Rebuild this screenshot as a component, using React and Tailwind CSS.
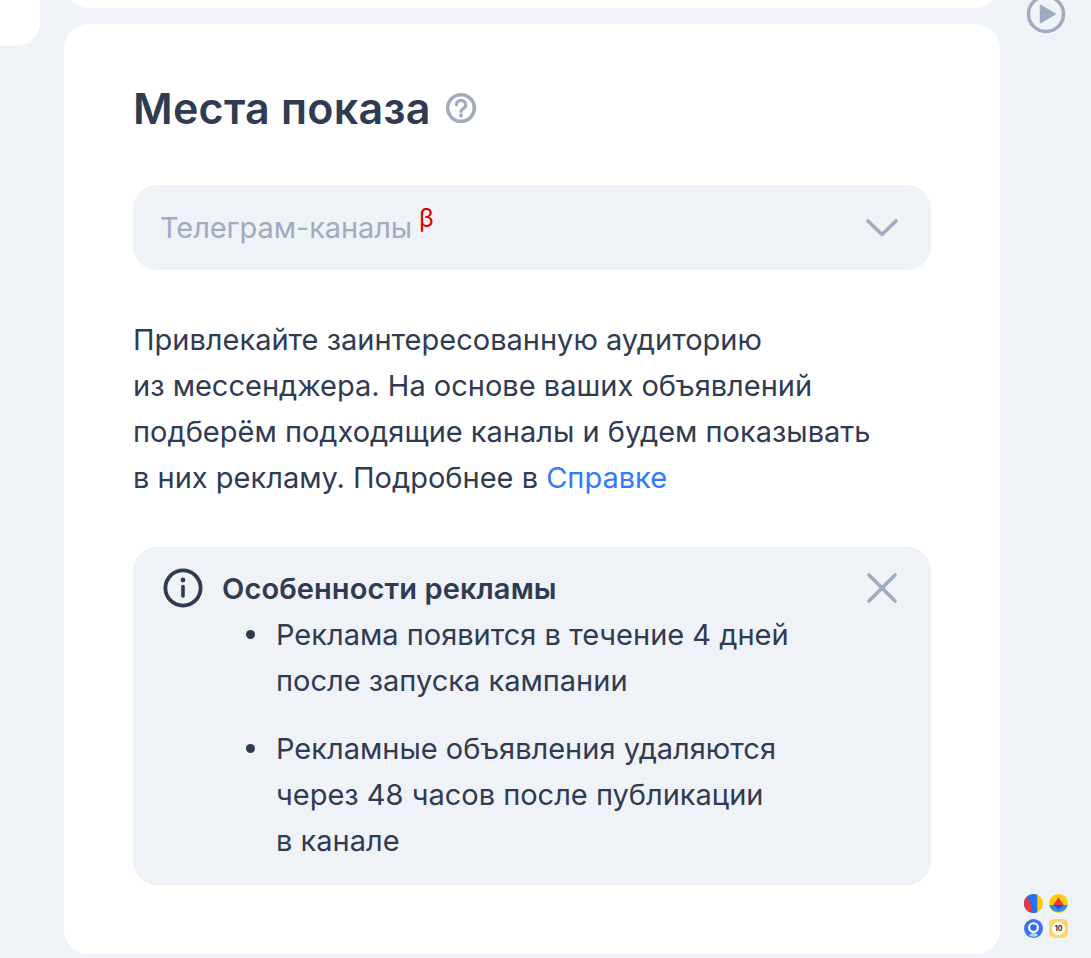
function PlayIcon() {
  return (
    <svg width="40" height="40" viewBox="0 0 40 40" fill="none">
      <circle cx="20" cy="20" r="17.5" stroke="#a0abc0" strokeWidth="3.5" />
      <path d="M14.5 11.5 L29 20 L14.5 28.5 Z" fill="#a0abc0" stroke="#a0abc0" strokeWidth="1.5" strokeLinejoin="round" />
    </svg>
  );
}

function HelpIcon() {
  return (
    <svg width="32" height="32" viewBox="0 0 32 32" fill="none" stroke="#a0abc0">
      <circle cx="16" cy="16" r="13.3" strokeWidth="3.6" />
      <path d="M11.5 12.8 A4.6 4.4 0 1 1 18.6 16.4 C17 17.4 16 18 16 19.6" strokeWidth="3.2" strokeLinecap="round" />
      <circle cx="16" cy="23.4" r="2" fill="#a0abc0" stroke="none" />
    </svg>
  );
}

function ChevronIcon() {
  return (
    <svg width="32" height="20" viewBox="0 0 32 20" fill="none">
      <path d="M2 3 L16 16.5 L30 3" stroke="#a0abc0" strokeWidth="3.6" strokeLinecap="round" strokeLinejoin="round" />
    </svg>
  );
}

function InfoIcon() {
  return (
    <svg width="40" height="40" viewBox="0 0 40 40" fill="none">
      <circle cx="20" cy="20" r="17.6" stroke="#2f3b52" strokeWidth="3.8" />
      <path d="M20 18.5 V28" stroke="#2f3b52" strokeWidth="3.6" strokeLinecap="round" />
      <circle cx="20" cy="12" r="2.4" fill="#2f3b52" />
    </svg>
  );
}

function CloseIcon() {
  return (
    <svg width="32" height="32" viewBox="0 0 32 32" fill="none">
      <path d="M3 3 L29 29 M29 3 L3 29" stroke="#a0abc0" strokeWidth="3.6" strokeLinecap="round" />
    </svg>
  );
}

function ServiceIcons() {
  return (
    <div className="grid grid-cols-2 gap-x-[7px] gap-y-[6px] w-[44px]">
      <svg width="19" height="19" viewBox="0 0 20 20">
        <circle cx="10" cy="10" r="10" fill="#ffcc00" />
        <path d="M14 0.9 A10 10 0 1 0 14 19.1 Z" fill="#2a6ff0" />
        <path d="M2.5 3.4 A10 10 0 0 0 7 19.5 C8 15 8.5 9.5 2.5 3.4 Z" fill="#f0324b" />
      </svg>
      <svg width="19" height="19" viewBox="0 0 20 20">
        <circle cx="10" cy="10" r="10" fill="#ffcc00" />
        <path d="M0.3 11.5 H19.7 A10 10 0 0 1 0.3 11.5 Z" fill="#2a8ff0" />
        <path d="M10 3.5 L15.5 11.5 H4.5 Z" fill="#f0324b" />
        <path d="M4.5 11.5 H15.5 L10 16 Z" fill="#1d4fd0" />
      </svg>
      <svg width="19" height="19" viewBox="0 0 20 20">
        <circle cx="10" cy="10" r="10" fill="#3f72ee" />
        <circle cx="10" cy="9" r="4.6" fill="#2f6bf0" stroke="#ffffff" strokeWidth="2.2" />
        <path d="M5 17 Q10 12.5 15 17 Q10 20.5 5 17 Z" fill="#a9d4ff" />
      </svg>
      <div className="w-[19px] h-[19px] rounded-[5px] bg-[#ffd666] flex items-center justify-center">
        <div className="w-[13px] h-[13px] rounded-full bg-white flex items-center justify-center text-[7px] font-bold leading-none text-[#222222]">
          10
        </div>
      </div>
    </div>
  );
}

function Bullet({ children, className }) {
  return (
    <li className={"flex gap-[21px] " + (className || "")}>
      <span className="w-[9px] h-[9px] mt-[18px] shrink-0 rounded-full bg-[#2f3b52]" />
      <span>{children}</span>
    </li>
  );
}

export default function App() {
  return (
    <div className="h-[958px] w-full overflow-hidden flex bg-[#eff2f7] text-[#2f3b52] font-['Inter','Noto_Sans',sans-serif]">
      {/* left sliver of the sidebar */}
      <div className="w-[64px] shrink-0">
        <div className="w-10 h-[46px] bg-white rounded-br-[24px]" />
      </div>

      <div className="w-[936px] shrink-0 flex flex-col">
        <div className="h-[40px] -mt-[32px] shrink-0 bg-white rounded-b-[24px]" />

        <div className="mt-4 h-[930px] shrink-0 bg-white rounded-[24px] pt-[52px] px-[69px]">
          <div className="flex items-center gap-[14px] h-[64px]">
            <h2 className="text-[43px] font-semibold leading-none tracking-[0.25px]">Места показа</h2>
            <HelpIcon />
          </div>

          <div className="mt-[45px] h-[85px] rounded-[24px] bg-[#eff2f7] flex items-center justify-between pl-[27px] pr-[33px]">
            <div className="flex items-start text-[#a0abc0] text-[29px] leading-none">
              <span className="tracking-[-0.1px]">Телеграм-каналы</span>
              <span className="text-[#e00000] text-[25px] ml-[7px] -mt-[7px]">β</span>
            </div>
            <ChevronIcon />
          </div>

          <p className="mt-[47px] text-[29px] leading-[46px]">
            Привлекайте заинтересованную аудиторию
            <br />
            из мессенджера. На основе ваших объявлений
            <br />
            подберём подходящие каналы и будем показывать
            <br />
            в них рекламу. Подробнее в <span className="text-[#2e7bff]">Справке</span>
          </p>

          <div className="mt-[46px] h-[338px] rounded-[24px] bg-[#eff2f7] pt-[20px] pl-[30px] pr-[33px]">
            <div className="flex items-center justify-between h-[42px]">
              <div className="flex items-center gap-[19px]">
                <InfoIcon />
                <span className="text-[29px] font-semibold leading-none tracking-[0.1px]">Особенности рекламы</span>
              </div>
              <CloseIcon />
            </div>

            <ul className="pl-[83px] pt-[3px] text-[29px] leading-[46px]">
              <Bullet>
                Реклама появится в течение 4 дней
                <br />
                после запуска кампании
              </Bullet>
              <Bullet className="mt-[22px]">
                Рекламные объявления удаляются
                <br />
                через 48 часов после публикации
                <br />в канале
              </Bullet>
            </ul>
          </div>
        </div>
      </div>

      <div className="flex-1 flex flex-col items-center justify-between pb-[20px] -mt-[6px]">
        <PlayIcon />
        <ServiceIcons />
      </div>
    </div>
  );
}
